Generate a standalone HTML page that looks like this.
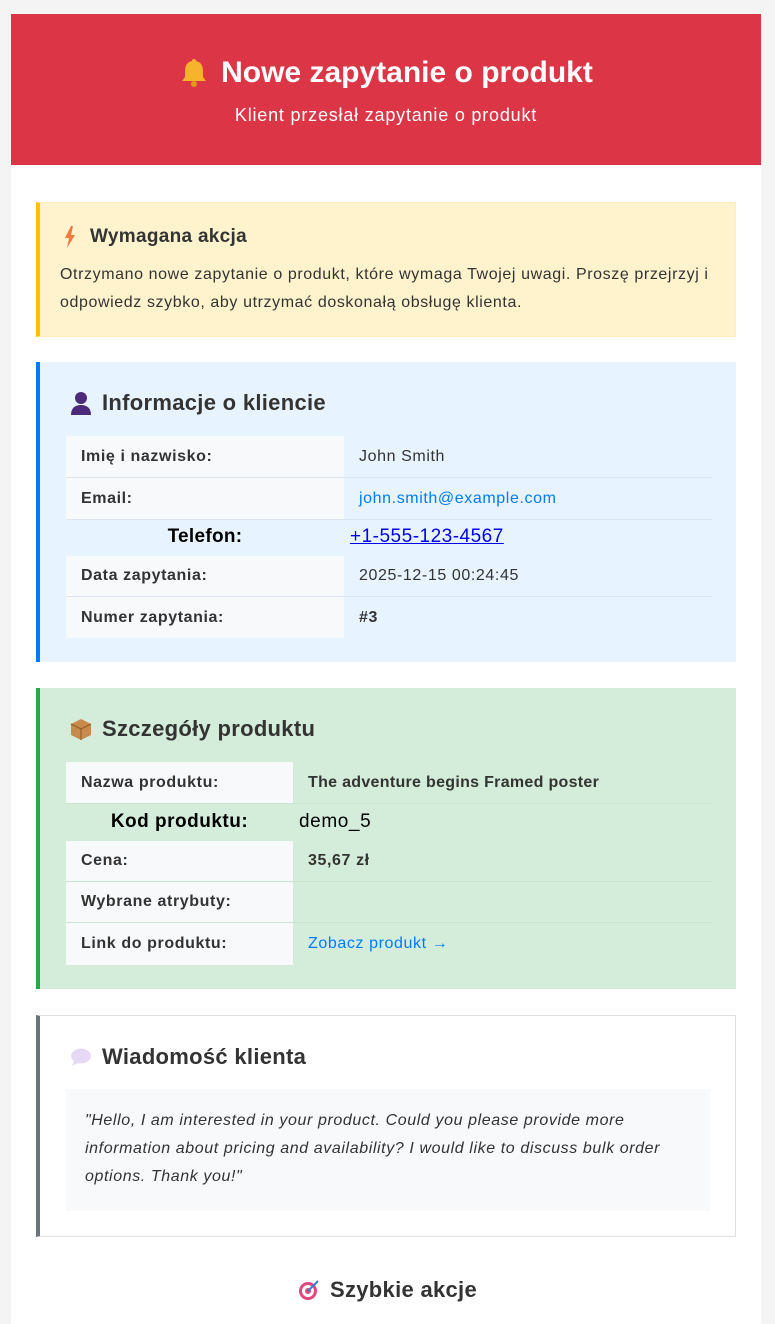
<!DOCTYPE html>
<html><head><meta charset="utf-8"><style>
*{margin:0;padding:0;box-sizing:border-box}
body{width:775px;height:1318px;background:#f4f4f4;font-family:"Liberation Sans",Arial,sans-serif;position:relative;overflow:hidden;color:#333;letter-spacing:0.6px}
.a{position:absolute}
.wrap{left:11px;top:14px;width:750px;height:1310px;background:#fff}
.hdr{left:11px;top:14px;width:750px;height:151px;background:#dc3545;color:#fff;text-align:center}
.box{left:36px;width:700px}
h2{font-size:22px;font-weight:bold;color:#333;position:absolute;display:flex;align-items:center;gap:10px;letter-spacing:0.3px}
.row{position:absolute;left:66px;width:646px;font-size:16px;display:flex;align-items:center;border-bottom:1px solid #dde6ee}
.lab{background:#f8f9fa;height:100%;display:flex;align-items:center;padding-left:15px;font-weight:bold;color:#333}
.val{padding-left:15px;color:#333}
</style></head><body>
<div class="a wrap"></div>
<div class="a hdr">
 <div class="a" style="left:0;right:0;top:42px;font-size:30px;font-weight:bold;display:flex;justify-content:center;align-items:center;gap:12px;letter-spacing:0">
  <svg width="30" height="32" viewBox="0 0 30 32"><path d="M15 2c-1.5 0-2 1-2 2-5 1-7 5-7 10v6l-3 4h24l-3-4v-6c0-5-2-9-7-10 0-1-.5-2-2-2z" fill="#f7b32b"/><circle cx="15" cy="27" r="3" fill="#e09a1a"/></svg>
  <span>Nowe zapytanie o produkt</span></div>
 <div class="a" style="left:0;right:0;top:91px;font-size:18px;letter-spacing:0.8px">Klient przesłał zapytanie o produkt</div>
</div>

<div class="a box" style="top:202px;height:135px;background:#fff3cd;border:1px solid #ffeeba;border-left:4px solid #ffc107"></div>
<h2 style="left:64px;top:226px;font-size:19px;gap:14px"><svg width="12" height="22" viewBox="0 0 12 22"><path d="M7 0L1 12h4l-2 10 8-13H7l2-9z" fill="#f4793b"/></svg>Wymagana akcja</h2>
<div class="a" style="left:60px;top:261px;width:672px;font-size:16px;line-height:28px;color:#333">Otrzymano nowe zapytanie o produkt, które wymaga Twojej uwagi. Proszę przejrzyj i odpowiedz szybko, aby utrzymać doskonałą obsługę klienta.</div>

<div class="a box" style="top:362px;height:300px;background:#e7f3ff;border-left:4px solid #007bff"></div>
<h2 style="left:70px;top:390px"><svg width="22" height="24" viewBox="0 0 22 24"><circle cx="11" cy="7" r="6" fill="#4b2a7a"/><path d="M1 24c0-7 4-10 10-10s10 3 10 10z" fill="#4b2a7a"/></svg>Informacje o kliencie</h2>
<div class="row" style="top:436px;height:42px"><div class="lab" style="width:278px">Imię i nazwisko:</div><div class="val">John Smith</div></div>
<div class="row" style="top:478px;height:42px"><div class="lab" style="width:278px">Email:</div><div class="val" style="color:#007bff">john.smith@example.com</div></div>
<div class="a" style="left:66px;top:526px;width:278px;text-align:center;font-size:19px;font-weight:bold;color:#000;letter-spacing:0.3px">Telefon:</div>
<div class="a" style="left:350px;top:526px;font-size:19px;color:#0000ee;text-decoration:underline;letter-spacing:0.5px">+1-555-123-4567</div>
<div class="row" style="top:556px;height:41px"><div class="lab" style="width:278px">Data zapytania:</div><div class="val">2025-12-15 00:24:45</div></div>
<div class="row" style="top:597px;height:41px;border-bottom:none"><div class="lab" style="width:278px">Numer zapytania:</div><div class="val" style="font-weight:bold">#3</div></div>

<div class="a box" style="top:688px;height:301px;background:#d4edda;border-left:4px solid #28a745"></div>
<h2 style="left:70px;top:716px"><svg width="22" height="22" viewBox="0 0 22 22"><path d="M11 1l10 5v11l-10 5-10-5V6z" fill="#c88a4a"/><path d="M1 6l10 5 10-5" stroke="#8a5a2a" fill="none"/><path d="M11 11v11" stroke="#8a5a2a"/></svg>Szczegóły produktu</h2>
<div class="row" style="top:762px;height:42px;border-color:#c8e3cf"><div class="lab" style="width:227px">Nazwa produktu:</div><div class="val" style="font-weight:bold;letter-spacing:0.3px">The adventure begins Framed poster</div></div>
<div class="a" style="left:66px;top:811px;width:227px;text-align:center;font-size:19px;font-weight:bold;color:#000;letter-spacing:0.5px">Kod produktu:</div>
<div class="a" style="left:299px;top:811px;font-size:19px;color:#000">demo_5</div>
<div class="row" style="top:841px;height:41px;border-color:#c8e3cf"><div class="lab" style="width:227px">Cena:</div><div class="val" style="font-weight:bold">35,67 zł</div></div>
<div class="row" style="top:882px;height:41px;border-color:#c8e3cf"><div class="lab" style="width:227px">Wybrane atrybuty:</div><div class="val"></div></div>
<div class="row" style="top:923px;height:42px;border-bottom:none"><div class="lab" style="width:227px">Link do produktu:</div><div class="val" style="color:#007bff">Zobacz produkt →</div></div>

<div class="a box" style="top:1015px;height:222px;background:#fff;border:1px solid #e0e0e0;border-left:4px solid #6c757d"></div>
<h2 style="left:70px;top:1044px"><svg width="22" height="20" viewBox="0 0 22 20"><ellipse cx="11" cy="9" rx="10" ry="7.5" fill="#e6d9f5"/><path d="M4 14l-2 5 6-3z" fill="#e6d9f5"/></svg>Wiadomość klienta</h2>
<div class="a" style="left:66px;top:1089px;width:644px;height:122px;background:#f8f9fa;padding:18px 19px;font-size:16px;line-height:28px;font-style:italic;color:#333">"Hello, I am interested in your product. Could you please provide more information about pricing and availability? I would like to discuss bulk order options. Thank you!"</div>

<h2 style="left:0;width:775px;justify-content:center;top:1277px"><svg width="22" height="22" viewBox="0 0 22 22"><circle cx="10" cy="12" r="9" fill="#e0487a"/><circle cx="10" cy="12" r="6" fill="#fff"/><circle cx="10" cy="12" r="3" fill="#e0487a"/><path d="M10 12L20 2" stroke="#3a7bd5" stroke-width="2"/></svg>Szybkie akcje</h2>
</body></html>
